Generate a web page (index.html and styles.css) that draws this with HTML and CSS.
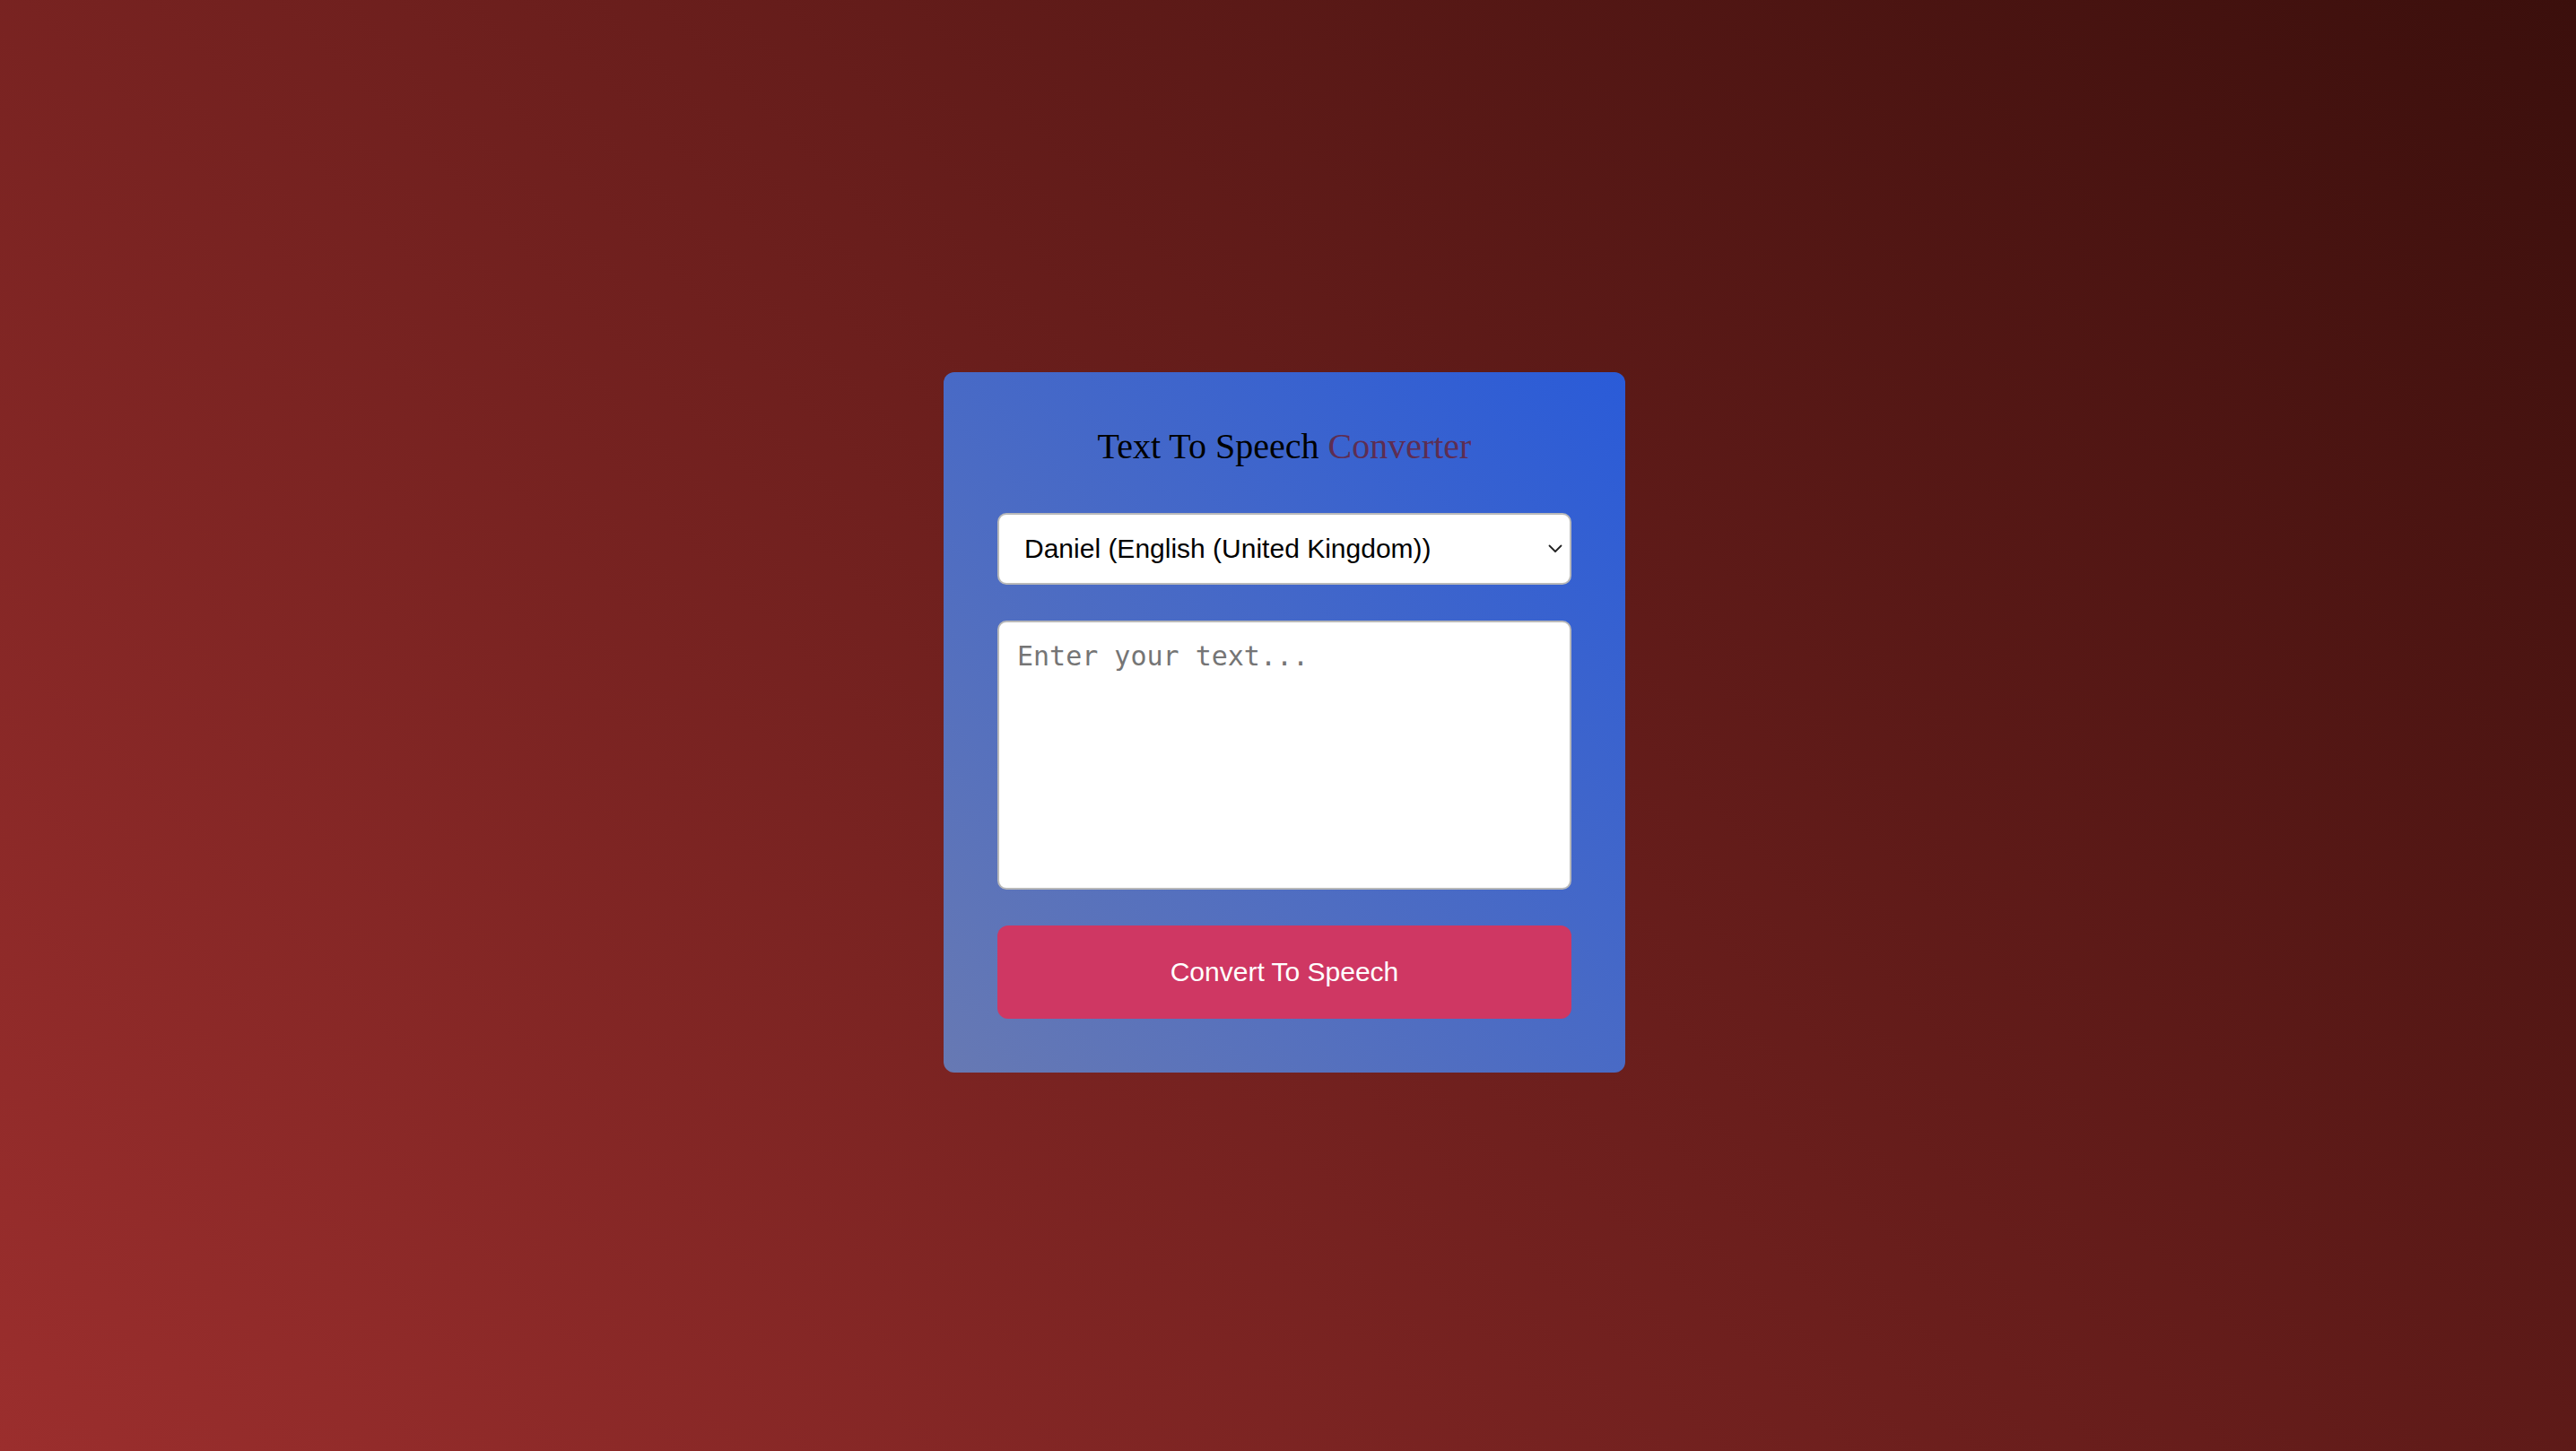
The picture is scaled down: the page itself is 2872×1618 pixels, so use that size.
FILE: index.html
```html
<!DOCTYPE html>
<html lang="en">
<head>
<meta charset="utf-8">
<title>Text To Speech Converter</title>
<link rel="stylesheet" href="styles.css">
</head>
<body>
  <main class="card">
    <h1 class="title">Text To Speech <span class="accent">Converter</span></h1>
    <div class="select-wrap">
      <select class="voice-select">
        <option>Daniel (English (United Kingdom))</option>
      </select>
      <svg class="chevron" width="16" height="10" viewBox="0 0 16 10" aria-hidden="true">
        <path d="M1.5 1.5 L8 8 L14.5 1.5" fill="none" stroke="#222" stroke-width="1.8" stroke-linecap="round" stroke-linejoin="round"/>
      </svg>
    </div>
    <textarea class="text-input" placeholder="Enter your text..."></textarea>
    <button class="convert-btn" type="button">Convert To Speech</button>
  </main>
</body>
</html>
```
FILE: styles.css
```css
* {
  box-sizing: border-box;
}

html, body {
  margin: 0;
  height: 100%;
}

body {
  display: flex;
  align-items: center;
  justify-content: center;
  padding: 0 8px 8px 0;
  background: linear-gradient(45deg, #9b2e2d, #3b0f0c);
  font-family: "Liberation Sans", Arial, sans-serif;
}

.card {
  width: 760px;
  padding: 60px;
  border-radius: 12px;
  background: linear-gradient(45deg, #6779b3, #2a5bd8);
  display: flex;
  flex-direction: column;
}

.title {
  margin: 0 0 51px;
  font-family: "Liberation Serif", "Times New Roman", serif;
  font-weight: normal;
  font-size: 40px;
  line-height: 46px;
  text-align: center;
  color: #000;
}

.accent {
  color: #5e2d52;
}

.select-wrap {
  position: relative;
  margin-bottom: 40px;
}

.voice-select {
  display: block;
  width: 100%;
  height: 80px;
  margin: 0;
  padding: 0 40px 0 28px;
  border: 2px solid #b9b9b9;
  border-radius: 10px;
  background: #fff;
  color: #000;
  font-family: "Liberation Sans", Arial, sans-serif;
  font-size: 30px;
  appearance: none;
  -webkit-appearance: none;
  outline: none;
}

.chevron {
  position: absolute;
  right: 10px;
  top: 35px;
  pointer-events: none;
}

.text-input {
  display: block;
  width: 100%;
  height: 300px;
  margin: 0 0 40px;
  padding: 20px 20px;
  border: 2px solid #b9b9b9;
  border-radius: 10px;
  background: #fff;
  font-family: "DejaVu Sans Mono", monospace;
  font-size: 30px;
  resize: none;
  outline: none;
}

.text-input::placeholder {
  color: #757575;
}

.convert-btn {
  display: block;
  width: 100%;
  height: 104px;
  margin: 0;
  border: none;
  border-radius: 12px;
  background: #cf3763;
  color: #fff;
  font-family: "Liberation Sans", Arial, sans-serif;
  font-size: 30px;
  cursor: pointer;
}
```
